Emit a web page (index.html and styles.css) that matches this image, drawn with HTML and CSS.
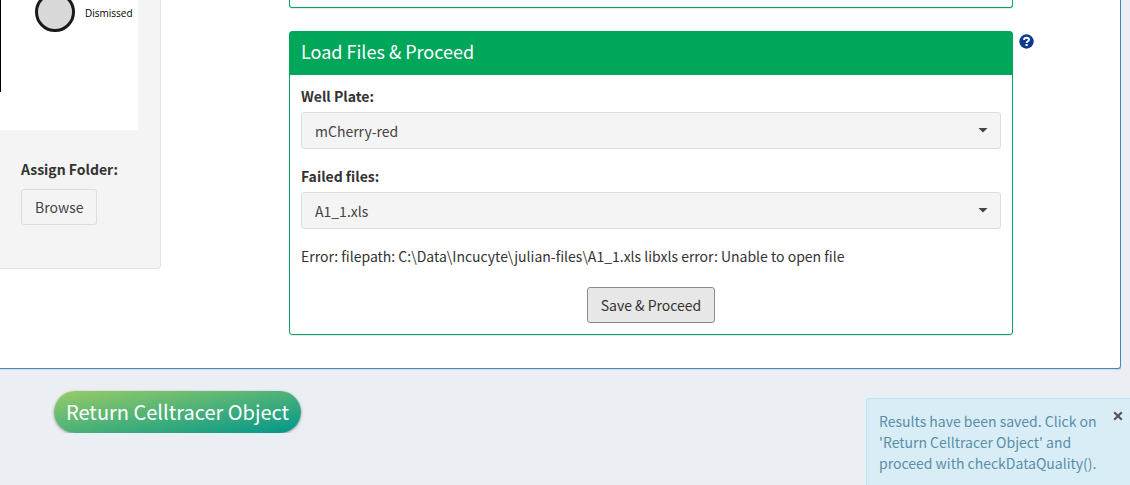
FILE: index.html
```html
<!DOCTYPE html>
<html lang="en">
<head>
<meta charset="utf-8">
<title>Celltracer</title>
<link rel="stylesheet" href="styles.css">
</head>
<body>
<main class="panel">
  <aside class="well">
    <svg class="plot" width="138" height="130" viewBox="0 0 138 130" role="img" aria-label="Plate legend">
      <rect width="138" height="130" fill="#fff"/>
      <rect width="1" height="92" fill="#000"/>
      <circle cx="55" cy="12" r="18.5" fill="#d8d8d8" stroke="#1a1a1a" stroke-width="3"/>
      <text class="legend" x="85" y="17">Dismissed</text>
    </svg>
    <div class="folder">
      <label class="label" for="browse">Assign Folder:</label>
      <button class="btn" id="browse" type="button">Browse</button>
    </div>
  </aside>
  <div class="content">
    <section class="box box-above"></section>
    <section class="box">
      <h2 class="box-header">Load Files &amp; Proceed</h2>
      <div class="box-body">
        <div class="field">
          <label class="label" for="plate">Well Plate:</label>
          <div class="picker">
            <select class="select" id="plate"><option>mCherry-red</option></select>
            <svg class="caret" width="10" height="5" viewBox="0 0 10 5"><path d="M.5 0h9L5 4.500z" fill="#444"/></svg>
          </div>
        </div>
        <div class="field">
          <label class="label" for="failed">Failed files:</label>
          <div class="picker">
            <select class="select" id="failed"><option>A1_1.xls</option></select>
            <svg class="caret" width="10" height="5" viewBox="0 0 10 5"><path d="M.5 0h9L5 4.500z" fill="#444"/></svg>
          </div>
        </div>
        <p class="message">Error: filepath: C:\Data\Incucyte\julian-files\A1_1.xls libxls error: Unable to open file</p>
        <button class="btn btn-active" type="button">Save &amp; Proceed</button>
      </div>
    </section>
  </div>
  <button class="help" type="button" aria-label="Help">
    <svg width="15" height="15" viewBox="0 0 15 15"><circle cx="7.5" cy="7.5" r="7.2" fill="#0c3a8c"/><path d="M5 5.9C5.1 4.4 6.100 3.700 7.500 3.700C9 3.700 10 4.500 10 5.700C10 7.300 7.600 7.300 7.600 9" fill="none" stroke="#fff" stroke-width="2"/><rect x="6.500" y="10" width="2.200" height="2" fill="#fff"/></svg>
  </button>
</main>
<button class="return" type="button">Return Celltracer Object</button>
<div class="toast" role="status">
  <p class="toast-text">Results have been saved. Click on 'Return Celltracer Object' and proceed with checkDataQuality().</p>
  <button class="close" type="button" aria-label="Close">
    <svg width="10" height="10" viewBox="0 0 10 10"><path d="M1.200 1.200l7.600 7.600M8.800 1.200L1.200 8.800" stroke="#555" stroke-width="2.200"/></svg>
  </button>
</div>
</body>
</html>
```
FILE: styles.css
```css
* {
  box-sizing: border-box;
}

body {
  margin: 0;
  background: #ebeef3;
  color: #333;
  font: 14px/20px "Noto Sans CJK SC", "Open Sans", sans-serif;
}

button,
select {
  font: inherit;
}

.panel {
  display: flex;
  align-items: flex-start;
  margin-right: 9px;
  padding-bottom: 33px;
  background: #fff;
  border: solid #3c8dbc;
  border-width: 0 1px 1px 0;
  border-radius: 0 0 3px 0;
  box-shadow: 0 1px 1px rgba(0, 0, 0, 0.1);
}

.well {
  flex: 0 0 161px;
  padding-bottom: 43px;
  background: #f4f4f4;
  border: solid #e3e3e3;
  border-width: 0 1px 1px 0;
  border-radius: 0 0 4px 0;
}

.plot {
  display: block;
}

.legend {
  font: 10px "Open Sans", sans-serif;
  fill: #000;
}

.folder {
  padding: 29px 20px 0 21px;
}

.label {
  display: block;
  margin-bottom: 6px;
  font-weight: 700;
}

.folder .label {
  margin-bottom: 10px;
}

.btn {
  display: block;
  padding: 7px 13px;
  background: #f4f4f4;
  border: 1px solid #ddd;
  border-radius: 3px;
  color: #444;
}

.btn-active {
  margin: 0 auto;
  background: #e7e7e7;
  border-color: #8c8c8c;
  color: #333;
}

.content {
  flex: 1;
  margin-left: 128px;
}

.box {
  border: 1px solid #00a65a;
  border-radius: 3px;
  box-shadow: 0 1px 1px rgba(0, 0, 0, 0.1);
}

.box-above {
  height: 8px;
  margin-bottom: 23px;
  border-top: 0;
  border-radius: 0 0 3px 3px;
}

.box-header {
  margin: 0;
  padding: 8px 11px 12px;
  background: #00a65a;
  color: #fff;
  font-size: 18px;
  font-weight: 400;
  line-height: 23px;
}

.box-body {
  padding: 11px 11px 11px;
}

.field {
  margin-bottom: 17px;
}

.picker {
  position: relative;
}

.select {
  display: block;
  width: 100%;
  height: 37px;
  padding: 0 13px;
  appearance: none;
  background: #f4f4f4;
  border: 1px solid #ddd;
  border-radius: 3px;
  color: #444;
}

.caret {
  position: absolute;
  top: 16px;
  right: 13px;
}

.message {
  margin: 0 0 21px;
}

.help {
  margin: 34px 86px 0 6px;
  padding: 0;
  background: none;
  border: 0;
  line-height: 0;
}

.return {
  display: block;
  margin: 22px 0 0 54px;
  padding: 8px 12px;
  background: linear-gradient(to bottom right, #99cc66, #00978a);
  border: 0;
  border-radius: 21px;
  box-shadow: 0 1px 3px rgba(0, 0, 0, 0.4);
  color: #fff;
  font-size: 20px;
  line-height: 26px;
}

.toast {
  position: fixed;
  right: 0;
  bottom: 0;
  display: flex;
  align-items: flex-start;
  width: 264px;
  padding: 12px 7px 11px 12px;
  background: #d9edf7;
  border: solid #bce8f1;
  border-width: 1px 0 0 1px;
  border-radius: 3px 0 0 0;
}

.toast-text {
  flex: 1;
  margin: 0;
  color: #5a8da8;
  line-height: 21px;
}

.close {
  padding: 0;
  background: none;
  border: 0;
  line-height: 0;
}
```
